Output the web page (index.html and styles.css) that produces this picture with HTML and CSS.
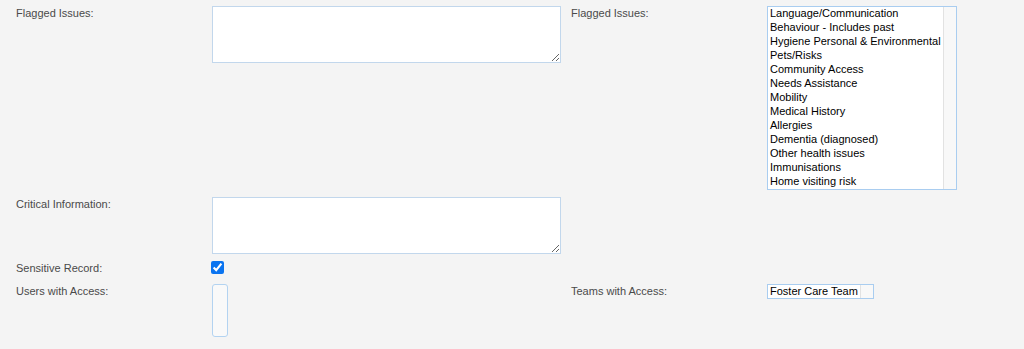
FILE: index.html
```html
<!DOCTYPE html>
<html lang="en">
<head>
  <meta charset="UTF-8" />
  <meta name="viewport" content="width=device-width, initial-scale=1.0" />
  <title>Flagged Issues</title>
  <link rel="stylesheet" href="styles.css">
</head>
<body>
  <form class="ficha">
    <label class="rotulo" for="flagNotes">Flagged Issues:</label>
    <div class="campo">
      <textarea id="flagNotes" class="caixa-texto"></textarea>
    </div>
    <label class="rotulo" for="flagList">Flagged Issues:</label>
    <div class="campo">
      <div class="lista-wrap lista-flags">
        <select id="flagList" class="lista" multiple size="13">
          <option>Language/Communication</option>
          <option>Behaviour - Includes past</option>
          <option>Hygiene Personal &amp; Environmental</option>
          <option>Pets/Risks</option>
          <option>Community Access</option>
          <option>Needs Assistance</option>
          <option>Mobility</option>
          <option>Medical History</option>
          <option>Allergies</option>
          <option>Dementia (diagnosed)</option>
          <option>Other health issues</option>
          <option>Immunisations</option>
          <option>Home visiting risk</option>
        </select>
        <span class="trilho"></span>
      </div>
    </div>

    <label class="rotulo" for="critical">Critical Information:</label>
    <div class="campo span-3">
      <textarea id="critical" class="caixa-texto"></textarea>
    </div>

    <label class="rotulo" for="sensitive">Sensitive Record:</label>
    <div class="campo campo-check span-3">
      <input type="checkbox" id="sensitive" checked>
    </div>

    <label class="rotulo" for="users">Users with Access:</label>
    <div class="campo">
      <select id="users" class="lista-users" multiple></select>
    </div>
    <label class="rotulo" for="teams">Teams with Access:</label>
    <div class="campo">
      <div class="lista-wrap lista-teams">
        <select id="teams" class="lista" multiple size="1">
          <option>Foster Care Team</option>
        </select>
        <span class="trilho"></span>
      </div>
    </div>
  </form>
</body>
</html>
```

FILE: styles.css
```css
body {
  margin: 0;
  background: #f4f4f4;
  color: #444;
  font-family: "Liberation Sans", Arial, sans-serif;
  font-size: 11px;
}

.ficha {
  display: grid;
  grid-template-columns: 196px 359px 196px 1fr;
  row-gap: 7px;
  padding: 6px 0 0 16px;
}

.rotulo {
  line-height: 14px;
  color: #4a4a4a;
}

.span-3 {
  grid-column: span 3;
}

.caixa-texto {
  display: block;
  box-sizing: border-box;
  width: 349px;
  height: 57px;
  margin: 0;
  padding: 2px;
  background: #fff;
  border: 1px solid #c2d7ec;
  border-radius: 0;
  font: 11px "Liberation Sans", Arial, sans-serif;
}

.campo-check {
  height: 16px;
}

.campo-check input {
  display: block;
  width: 13px;
  height: 13px;
  margin: 0 0 0 -1px;
  accent-color: #0a74f0;
}

/* caixa da lista com trilho de scroll desenhado a parte */
.lista-wrap {
  display: flex;
  box-sizing: border-box;
  background: #fff;
  border: 1px solid #a9cdf0;
}

.lista-flags {
  width: 190px;
  height: 184px;
}

.lista-teams {
  width: 107px;
  height: 15px;
}

.lista {
  flex: 1;
  min-width: 0;
  height: 100%;
  margin: 0;
  padding: 0;
  background: #fff;
  color: #000;
  border: none;
  border-radius: 0;
  font: 11px "Liberation Sans", Arial, sans-serif;
  overflow: hidden;
  outline: none;
}

.lista option {
  padding: 0 2px;
  line-height: 14px;
  height: 14px;
}

.lista-teams .lista option {
  line-height: 13px;
  height: 13px;
}

.trilho {
  width: 12px;
  flex: none;
  background: #f8f8f8;
  border-left: 1px solid #e2e2e2;
}

.lista-users {
  display: block;
  box-sizing: border-box;
  width: 16px;
  height: 53px;
  margin: 0;
  padding: 0;
  background: #f9f9f9;
  border: 1px solid #b3d3f1;
  border-radius: 3px;
  overflow: hidden;
}
```
